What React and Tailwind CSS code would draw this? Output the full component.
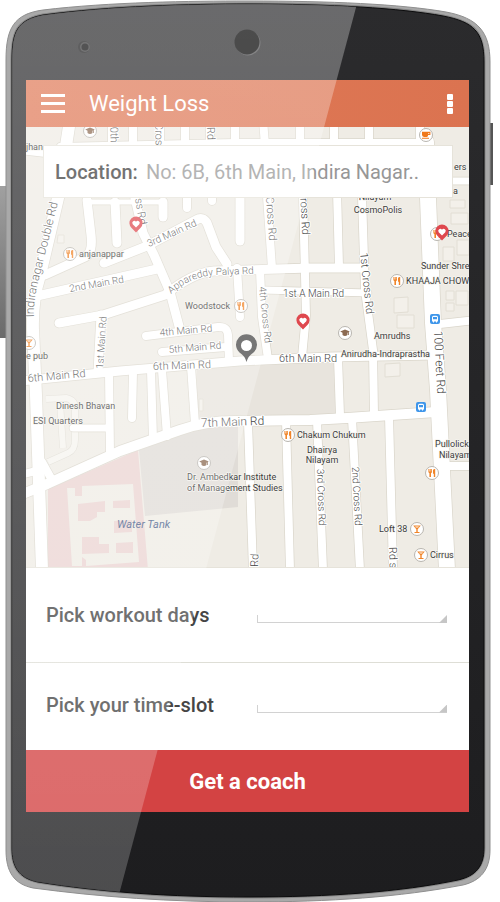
import React from "react";

const OUTLINE =
  "M6 60 C6 28 14 14 43 10 C110 2 190 1 248 1 C330 1 400 4 446 12 C478 18 490 32 490 62 V850 C490 870 480 881 463 885 C400 897 330 902 248 902 C170 902 100 897 33 888 C14 884 6 872 6 850 Z";
const FACE =
  "M12 60 C12 32 17 20 43 15 C110 6 190 4 248 4 C330 4 400 8 443 16 C474 22 484 32 484 62 V848 C484 866 476 876 458 880 C400 892 330 897 248 897 C170 897 100 892 38 882 C18 878 12 866 12 848 Z";

function PhoneBody() {
  return (
    <svg className="absolute inset-0 h-full w-full" viewBox="0 0 493 902" preserveAspectRatio="none" aria-hidden="true">
      <defs>
        <linearGradient id="face" x1="0" y1="0" x2="0" y2="1">
          <stop offset="0" stopColor="#2b2b2d" />
          <stop offset="1" stopColor="#1d1d1f" />
        </linearGradient>
        <linearGradient id="side" x1="0" y1="0" x2="0" y2="1">
          <stop offset="0" stopColor="#a0a0a0" />
          <stop offset="1" stopColor="#6a6a6a" />
        </linearGradient>
      </defs>
      <rect x="0" y="186" width="8" height="152" fill="url(#side)" />
      <rect x="487" y="123" width="6" height="62" fill="#555555" />
      <path d={OUTLINE} fill="#a9a9a9" stroke="#8f8f8f" strokeWidth="1" />
      <path d={FACE} fill="url(#face)" stroke="#858585" strokeWidth="3" />
      <path d={FACE} fill="url(#face)" stroke="#0c0c0d" strokeWidth="1" />
      <circle cx="84" cy="47" r="6" fill="#1c1c1d" />
      <circle cx="85" cy="47" r="5" fill="#3c3c3d" />
      <circle cx="85" cy="47" r="3.5" fill="#0b0b0c" />
      <circle cx="248" cy="43" r="12.5" fill="#505052" />
      <circle cx="247" cy="42" r="12.5" fill="#000000" />
    </svg>
  );
}

function Glare() {
  return (
    <svg className="pointer-events-none absolute inset-0 h-full w-full" viewBox="0 0 493 902" preserveAspectRatio="none" aria-hidden="true">
      <defs>
        <linearGradient id="glare" x1="0" y1="0" x2="0" y2="1">
          <stop offset="0" stopColor="#ffffff" stopOpacity="0.3" />
          <stop offset="1" stopColor="#ffffff" stopOpacity="0.21" />
        </linearGradient>
        <clipPath id="faceClip">
          <path d={FACE} />
        </clipPath>
      </defs>
      <path d="M0 0 H358 L117 902 H0 Z" fill="url(#glare)" clipPath="url(#faceClip)" />
    </svg>
  );
}

// Each road: path, width
const ROADS = [
  ["M70 120 L58 198 L40 275 Q32 300 33 330 L36 395 L42 570", 12],
  ["M20 381 L120 371 L240 361 L330 357 L436 355", 9],
  ["M37 296 L157 269", 9],
  ["M87 200 L91 235 Q93 253 85 257 L45 275", 9],
  ["M87 202 H164", 5],
  ["M115 202 L117 243", 9],
  ["M163 202 V217", 9],
  ["M133 190 L135 198 L143 233 L154 255 L170 292 L180 330", 9],
  ["M104 263 L147 246 L196 220 Q203 216 207 223 L216 247 L227 264", 9],
  ["M59 323 L103 315 L165 295 Q192 273 214 271 L310 268 H360", 9],
  ["M101 315 L98 372", 9],
  ["M146 336 L218 327 Q227 326 228 335 L229 361", 8],
  ["M162 352 L226 347", 8],
  ["M187 196 V208", 8],
  ["M212 196 V201", 8],
  ["M240 196 V241", 9],
  ["M237 268 L240 317", 8],
  ["M267 196 L272 268", 8],
  ["M260 270 L262 317 L268 359", 8],
  ["M303 196 L306 315 L302 357", 8],
  ["M263 290 L368 293", 7],
  ["M337 190 L339 267", 8],
  ["M362 196 L365 290 L373 350 L374 415", 8],
  ["M338 357 L340 416", 8],
  ["M426 142 L428 198 L433 323 L438 390 L447 570", 16],
  ["M440 324 L475 320", 8],
  ["M445 466 H475", 8],
  ["M20 495 L47 484 L120 451 L180 430 Q205 421 235 421 L310 420 L347 418 L436 412", 10],
  ["M248 422 L253 570", 8],
  ["M286 420 L290 570", 8],
  ["M317 420 L323 570", 8],
  ["M352 418 L360 570", 8],
  ["M389 416 L393 570", 8],
  ["M109 372 L110 454", 8],
  ["M133 372 L132 418", 8],
  ["M151 370 L153 440", 8],
  ["M162 370 L167 436", 8],
  ["M191 366 L195 424", 8],
  ["M73 428 H108", 7],
  ["M20 475 L40 470", 8],
  ["M42 462 L52 480", 8],
  ["M60 146 L235 142 H430", 6],
  ["M185 120 V145", 8],
  ["M235 120 V145", 8],
  ["M210 120 V145", 8],
  ["M160 120 V145", 8],
  ["M133 120 V145", 8],
  ["M112 120 V145", 8],
  ["M263 120 L265 145", 8],
  ["M300 120 V145", 8],
  ["M334 120 V145", 8],
  ["M369 120 V145", 8],
  ["M420 120 V142", 8],
  ["M20 150 L46 153", 8],
  ["M446 181 H475", 7],
];

const BUILDINGS = [
  "M58 235 h6 v8 h-7 Z",
  "M394 298 l14 -1 v15 l-14 1 Z",
  "M397 315 h17 v13 h-17 Z",
  "M385 364 l15 -1 v13 l-15 1 Z",
  "M199 399 h4 v12 h-4 Z",
  "M450 200 h15 v8 h-15 Z",
  "M451 213 h17 v11 h-17 Z",
  "M443 247 h11 v14 h-11 Z",
  "M457 240 h12 v15 h-12 Z",
  "M446 291 h8 v9 h-8 Z",
  "M456 291 h12 v14 h-12 Z",
  "M446 303 h8 v8 h-8 Z",
];

// Road names: text, x, y, angle, size
const ROAD_NAMES = [
  ["2nd Main Rd", 70, 292, -10, 10],
  ["3rd Main Rd", 149, 247, -24, 10],
  ["4th Main Rd", 160, 336, -5, 10],
  ["5th Main Rd", 169, 353, -5, 10],
  ["6th Main Rd", 153, 370, -2, 11],
  ["6th Main Rd", 28, 382, -5, 11],
  ["6th Main Rd", 279, 362, 0, 11],
  ["1st A Main Rd", 283, 297, 0, 10],
  ["7th Main Rd", 201, 427, -2, 12],
  ["1st Main Rd", 103, 369, -86, 10],
  ["4th Cross Rd", 259, 287, 84, 10],
  ["Cross Rd", 266, 197, 86, 11],
  ["Cross Rd", 300, 191, 87, 11],
  ["1st Cross Rd", 360, 253, 84, 11],
  ["3rd Cross Rd", 317, 469, 88, 10],
  ["2nd Cross Rd", 352, 467, 87, 10],
  ["100 Feet Rd", 434, 331, 87, 12],
  ["Cross Rd", 132, 182, 80, 11],
  ["10th C", 110, 121, 88, 11],
  ["Cross", 155, 123, 88, 11],
  ["Rd", 207, 127, 88, 11],
  ["Rd", 258, 567, -88, 11],
  ["Rd s", 389, 547, 88, 11],
];

// Places: text, x, y, anchor
const PLACES = [
  ["anjanappar", 79, 257, "start"],
  ["Woodstock", 185, 309, "start"],
  ["e pub", 26, 359, "start"],
  ["Dinesh Bhavan", 56, 409, "start"],
  ["ESI Quarters", 33, 424, "start"],
  ["Amrudhs", 374, 339, "start"],
  ["Anirudha-Indraprastha", 341, 357, "start"],
  ["KHAAJA CHOWK", 406, 284, "start"],
  ["Sunder Shree", 421, 269, "start"],
  ["Peace", 447, 237, "start"],
  ["Nilayam", 375, 200, "middle"],
  ["CosmoPolis", 378, 213, "middle"],
  ["Chakum Chukum", 297, 438, "start"],
  ["Dhairya", 322, 453, "middle"],
  ["Nilayam", 322, 463, "middle"],
  ["Dr. Ambedkar Institute", 187, 480, "start"],
  ["of Management Studies", 187, 491, "start"],
  ["Pullolicka", 435, 447, "start"],
  ["Nilayam", 439, 458, "start"],
  ["Loft 38", 379, 532, "start"],
  ["Cirrus", 430, 558, "start"],
  ["ers", 454, 170, "start"],
  ["a", 453, 194, "start"],
  ["jhan", 26, 150, "start"],
];

function Spot({ x, y, kind }) {
  return (
    <g transform={`translate(${x} ${y})`}>
      <circle r="6.5" fill="#ffffff" stroke="#b9b6b0" strokeWidth="1" />
      {kind === "food" && (
        <g fill="#f0852a">
          <path d="M-3.6 -4 h.9 v2.4 h.5 v-2.4 h.9 v2.4 h.5 v-2.4 h.8 V-.8 L-1 .2 V4 H-2.6 V.2 L-3.6 -.8 Z" />
          <path d="M1 -3 Q1.6 -4.2 3.2 -4 V4 H1.8 V.8 H1 Z" />
        </g>
      )}
      {kind === "bar" && (
        <path d="M-3.8 -3.6 H3.8 L.7 .3 V2.9 H2.5 V4 H-2.5 V2.9 H-.7 V.3 Z M-1.9 -2.5 L-1.2 -1.5 H1.2 L1.9 -2.5 Z" fill="#f0852a" fillRule="evenodd" />
      )}
      {kind === "cafe" && (
        <path d="M-4 -3.2 H4.4 V0 H2.2 Q2 1.8 .6 2 H-2 Q-4 1.8 -4 -.2 Z M2.3 -2.1 V-1 H3.3 V-2.1 Z M-4 2.8 H3 V3.7 H-4 Z" fill="#f0781a" fillRule="evenodd" />
      )}
      {kind === "school" && (
        <path d="M0 -3.5 L4.8 -1.4 L3.8 -.9 V2 H3 V-.5 L2.5 -.3 V2 Q0 4 -2.5 2 V-.3 L-4.8 -1.4 Z" fill="#8c6b52" />
      )}
    </g>
  );
}

function Heart({ x, y }) {
  return (
    <g transform={`translate(${x} ${y})`}>
      <path d="M0 8.5 L-4.4 4 A6.6 6.6 0 1 1 4.4 4 Z" fill="#df484e" />
      <path d="M0 3.4 L-3.3 .2 A2 2 0 0 1 0 -2.2 A2 2 0 0 1 3.3 .2 Z" fill="#ffffff" />
    </g>
  );
}

function Station({ x, y }) {
  return (
    <g transform={`translate(${x} ${y})`}>
      <rect x="-5" y="-5" width="10" height="10" rx="2" fill="#3f96ea" />
      <path d="M-3 2.6 V-1.6 Q-3 -3.2 -1.4 -3.2 H1.4 Q3 -3.2 3 -1.6 V2.6 H2 V3.4 H1 V2.6 H-1 V3.4 H-2 V2.6 Z M-2 -1.9 V.2 H2 V-1.9 Z" fill="#ffffff" fillRule="evenodd" />
    </g>
  );
}

function MapView() {
  return (
    <svg className="block w-full" viewBox="26 127 443 440" preserveAspectRatio="xMidYMid slice" role="img" aria-label="Map of Indira Nagar">
      <rect x="20" y="120" width="460" height="460" fill="#efece5" />
      <path d="M197 362 L340 357 V416 L197 422 Z" fill="#e8e4dd" />
      <path d="M139 450 L200 426 L238 424 V507 L145 516 Z" fill="#e0dcd7" />
      <path d="M48 489 L138 450 L148 570 H48 Z" fill="#ebd4d2" />
      <path
        d="M67 488 H75 V496 H82 V486 L133 484 L139 562 L86 566 V560 L82 557 V566 H72 Z M78 504 V521 H90 L97 517 V512 H105 V501 Z M113 501 V508 H130 V500 Z M114 521 V533 L132 532 V520 Z M82 537 V554 L109 553 V544 H99 V537 Z M116 543 V553 H133 V542 Z"
        fill="#efece5"
        fillRule="evenodd"
      />
      <path d="M46 399 L66 398 Q76 400 75 410 V440 Q75 450 68 453 L48 462 M60 402 L63 448" fill="none" stroke="#dedbd2" strokeWidth="7" />
      <path d="M46 399 L66 398 Q76 400 75 410 V440 Q75 450 68 453 L48 462 M60 402 L63 448" fill="none" stroke="#f6f4ef" strokeWidth="6" />
      <g fill="#f3f0ea" stroke="#e2ded4" strokeWidth="1">
        {BUILDINGS.map((d) => (
          <path key={d} d={d} />
        ))}
      </g>
      <g fill="none" stroke="#dad6cb" strokeLinecap="round" strokeLinejoin="round">
        {ROADS.map(([d, w]) => (
          <path key={d} d={d} strokeWidth={w + 1.4} />
        ))}
      </g>
      <g fill="none" stroke="#ffffff" strokeLinecap="round" strokeLinejoin="round">
        {ROADS.map(([d, w]) => (
          <path key={d} d={d} strokeWidth={w} />
        ))}
      </g>

      <g fill="#454545" stroke="#ffffff" strokeWidth="2" strokeLinejoin="round" paintOrder="stroke" fontFamily="Roboto, sans-serif">
        {ROAD_NAMES.map(([name, x, y, angle, size]) => (
          <text key={`${name}-${x}`} transform={`translate(${x} ${y}) rotate(${angle})`} fontSize={size} fontWeight="300">
            {name}
          </text>
        ))}
        <path id="doubleRoad" d="M34 317 Q33 300 40 275 L66 170" fill="none" stroke="none" />
        <text fontSize="12" fontWeight="300">
          <textPath href="#doubleRoad">Indiranagar Double Rd</textPath>
        </text>
        <path id="palyaRoad" d="M171 294 Q194 274 222 275 L270 273" fill="none" stroke="none" />
        <text fontSize="10" fontWeight="300">
          <textPath href="#palyaRoad">Appareddy Palya Rd</textPath>
        </text>
      </g>

      <g fill="#3c3c3c" stroke="#f6f4ef" strokeWidth="1.5" strokeLinejoin="round" paintOrder="stroke" fontFamily="Roboto, sans-serif" fontSize="9">
        {PLACES.map(([name, x, y, anchor]) => (
          <text key={`${name}-${x}`} x={x} y={y} textAnchor={anchor}>
            {name}
          </text>
        ))}
      </g>
      <text x="117" y="528" fill="#4a618c" fontFamily="Roboto, sans-serif" fontSize="11" fontStyle="italic">
        Water Tank
      </text>

      <Spot x={90} y={131} kind="school" />
      <Spot x={426} y={135} kind="cafe" />
      <Spot x={70} y={254} kind="food" />
      <Spot x={241} y={306} kind="food" />
      <Spot x={29} y={343} kind="bar" />
      <Spot x={397} y={281} kind="food" />
      <Spot x={437} y={234} kind="food" />
      <Spot x={345} y={333} kind="school" />
      <Spot x={204} y={463} kind="school" />
      <Spot x={288} y={435} kind="food" />
      <Spot x={432} y={473} kind="food" />
      <Spot x={417} y={529} kind="bar" />
      <Spot x={421} y={555} kind="bar" />
      <Station x={435} y={319} />
      <Station x={421} y={407} />
      <Heart x={136} y={224} />
      <Heart x={303} y={321} />
      <Heart x={442} y={232} />
      <path d="M246.5 362 Q245 356 239.5 352.500 A10.5 10.5 0 1 1 253.500 352.500 Q248 356 246.500 362 Z" fill="#454545" />
      <circle cx="246.5" cy="345.5" r="5.5" fill="#ffffff" />
    </svg>
  );
}

function PickRow({ id, label, className }) {
  return (
    <div className={`flex items-center justify-between bg-white pr-[22px] pl-5 ${className}`}>
      <label htmlFor={id} className="text-xl font-medium text-[#454545]">
        {label}
      </label>
      <div className="relative h-4 w-[190px]">
        <select id={id} className="block h-4 w-full appearance-none border-b border-[#d2d2d2] bg-transparent outline-none" defaultValue="">
          <option value="" />
        </select>
        <span className="pointer-events-none absolute bottom-0 left-0 h-2 w-px bg-[#d2d2d2]" />
        <span className="pointer-events-none absolute right-0 bottom-0 size-2 bg-[#c6c6c6] [clip-path:polygon(100%_0,100%_100%,0_100%)]" />
      </div>
    </div>
  );
}

export default function App() {
  return (
    <div className="min-h-screen bg-white font-['Roboto',sans-serif]">
      <div className="relative max-w-[493px] pt-20 pr-6 pb-[90px] pl-[26px]">
        <PhoneBody />
        <main className="relative">
          <header className="flex h-[47px] items-center bg-gradient-to-r from-[#e07a58] to-[#db7350] pr-4 pl-[15px] text-white">
            <button type="button" aria-label="Menu" className="flex w-6 flex-col gap-[5px]">
              <span className="h-[3px] w-full bg-white" />
              <span className="h-[3px] w-full bg-white" />
              <span className="h-[3px] w-full bg-white" />
            </button>
            <h1 className="ml-6 text-[22px] leading-7">Weight Loss</h1>
            <button type="button" aria-label="More options" className="ml-auto flex flex-col gap-px">
              <span className="size-1.5 rounded-[1px] bg-white" />
              <span className="size-1.5 rounded-[1px] bg-white" />
              <span className="size-1.5 rounded-[1px] bg-white" />
            </button>
          </header>
          <section className="relative">
            <MapView />
            <div className="absolute top-[18px] right-4 left-[17px] flex h-[53px] items-center gap-2 border border-[#e6e3da] bg-white pr-3 pl-[11px] text-xl">
              <label htmlFor="location" className="font-medium text-[#3c3c3c]">
                Location:
              </label>
              <input
                id="location"
                type="text"
                defaultValue="No: 6B, 6th Main, Indira Nagar.."
                className="min-w-0 flex-1 bg-transparent text-[#979797] outline-none"
              />
            </div>
          </section>
          <PickRow id="days" label="Pick workout days" className="h-[96px] border-y border-t-[#e6e3da] border-b-[#deded6]" />
          <PickRow id="slot" label="Pick your time-slot" className="h-[87px] pb-1" />
          <button type="button" className="block h-[62px] w-full bg-[#d34343] text-[22px] font-bold text-white">
            Get a coach
          </button>
        </main>
        <Glare />
      </div>
    </div>
  );
}
